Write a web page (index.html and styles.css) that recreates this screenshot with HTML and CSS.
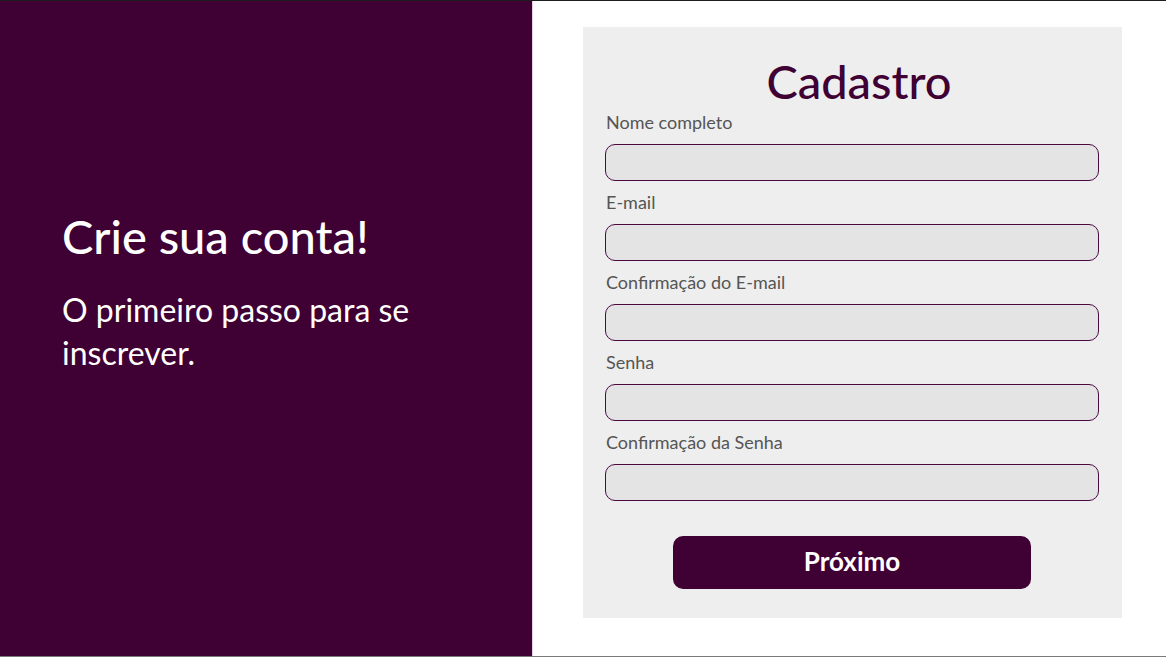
FILE: index.html
```html
<!DOCTYPE html>
<html lang="pt-BR">
<head>
<meta charset="utf-8">
<title>Cadastro</title>
<link rel="stylesheet" href="styles.css">
</head>
<body>
<main class="page">
  <section class="intro">
    <h1 class="intro-title">Crie sua conta!</h1>
    <p class="intro-text">O primeiro passo para se inscrever.</p>
  </section>
  <section class="side">
    <form class="card">
      <h2 class="card-title">Cadastro</h2>
      <label class="field">
        <span class="field-label">Nome completo</span>
        <input class="field-input" type="text">
      </label>
      <label class="field">
        <span class="field-label">E-mail</span>
        <input class="field-input" type="email">
      </label>
      <label class="field">
        <span class="field-label">Confirmação do E-mail</span>
        <input class="field-input" type="email">
      </label>
      <label class="field">
        <span class="field-label">Senha</span>
        <input class="field-input" type="password">
      </label>
      <label class="field">
        <span class="field-label">Confirmação da Senha</span>
        <input class="field-input" type="password">
      </label>
      <div class="actions">
        <button class="btn" type="button">Próximo</button>
      </div>
    </form>
  </section>
</main>
</body>
</html>
```
FILE: styles.css
```css
* { box-sizing: border-box; }
html, body { margin: 0; padding: 0; }
body {
  width: 1166px;
  height: 657px;
  overflow: hidden;
  background: #ffffff;
  font-family: "Lato", "Liberation Sans", sans-serif;
}
.page {
  display: flex;
  height: 657px;
  border-top: 1px solid #1c1c1c;
  border-bottom: 1px solid #7a7a7a;
}
.intro {
  width: 533px;
  flex: none;
  background: #3f0034;
  border-right: 1px solid #e9cfe3;
  padding: 205px 40px 0 62px;
  color: #ffffff;
}
.intro-title {
  margin: 0;
  font-family: "Lato", sans-serif;
  font-weight: 500;
  font-size: 47px;
  line-height: 60px;
  letter-spacing: 0;
}
.intro-text {
  margin: 22px 0 0;
  font-size: 32px;
  line-height: 43px;
  max-width: 390px;
}
.side {
  flex: 1;
  padding: 26px 44px 0 50px;
}
.card {
  width: 539px;
  height: 591px;
  background: #eeeeee;
  padding: 26px 23px 0 22px;
  display: flex;
  flex-direction: column;
}
.card-title {
  margin: 0;
  text-align: center;
  color: #3f0034;
  font-weight: 500;
  font-size: 47px;
  line-height: 57px;
  padding-left: 14px;
}
.field {
  display: flex;
  flex-direction: column;
  margin-bottom: 9px;
}
.field-label {
  color: #555555;
  font-size: 18px;
  line-height: 24px;
  padding-left: 1px;
  margin-bottom: 10px;
}
.field-input {
  height: 37px;
  width: 494px;
  border: 1px solid #4a0a3f;
  border-radius: 10px;
  background: #e4e4e4;
  font: inherit;
  outline: none;
}
.actions {
  display: flex;
  justify-content: center;
  margin-top: 26px;
}
.btn {
  width: 358px;
  height: 53px;
  border: none;
  border-radius: 10px;
  background: #3f0034;
  color: #ffffff;
  font-family: "Lato", sans-serif;
  font-weight: 700;
  font-size: 26px;
  padding: 0 0 4px;
  cursor: pointer;
}
```
